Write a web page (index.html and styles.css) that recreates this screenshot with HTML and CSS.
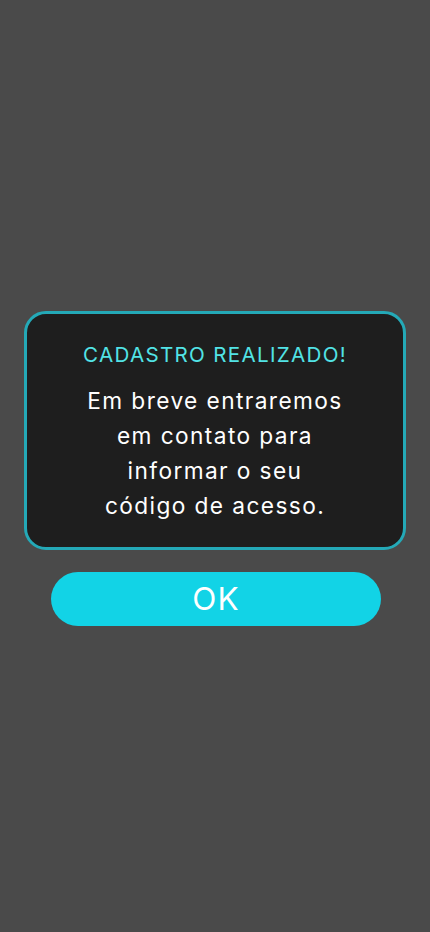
FILE: index.html
```html
<!DOCTYPE html>
<html lang="pt-BR">
<head>
<meta charset="utf-8">
<meta name="viewport" content="width=430, initial-scale=1">
<link rel="stylesheet" href="styles.css">
<title>Cadastro realizado</title>
</head>
<body>
<main class="screen">
  <section class="dialog">
    <h1 class="dialog-title">CADASTRO REALIZADO!</h1>
    <p class="dialog-text">Em breve entraremos<br>em contato para<br>informar o seu <br>código de acesso.</p>
  </section>
  <button class="ok-button" type="button">OK</button>
</main>
</body>
</html>
```

FILE: styles.css
```css
* { box-sizing: border-box; }
html, body {
  margin: 0;
  padding: 0;
  background: #4a4a4a;
}
body {
  font-family: "Inter", "Noto Sans", sans-serif;
}
.screen {
  width: 430px;
  height: 932px;
  display: flex;
  flex-direction: column;
  align-items: center;
  justify-content: center;
  gap: 22px;
  padding-top: 4px;
}
.dialog {
  width: 382px;
  height: 239px;
  background: #1e1e1e;
  border: 3px solid #24a9b7;
  border-radius: 22px;
  display: flex;
  flex-direction: column;
  align-items: center;
  padding-top: 27px;
}
.dialog-title {
  margin: 0;
  font-size: 20.6px;
  font-weight: 400;
  color: #52e3e6;
  letter-spacing: 1.3px;
  line-height: 28px;
}
.dialog-text {
  margin: 14px 0 0;
  font-size: 22.7px;
  font-weight: 400;
  color: #ffffff;
  text-align: center;
  letter-spacing: 1.4px;
  line-height: 35px;
}
.ok-button {
  width: 330px;
  height: 54px;
  margin-left: 2px;
  border: none;
  border-radius: 27px;
  background: #12d3e6;
  color: #ffffff;
  font-family: "Inter", "Noto Sans", sans-serif;
  font-size: 31.5px;
  font-weight: 400;
  letter-spacing: 1px;
  padding: 0;
  cursor: pointer;
}
```
